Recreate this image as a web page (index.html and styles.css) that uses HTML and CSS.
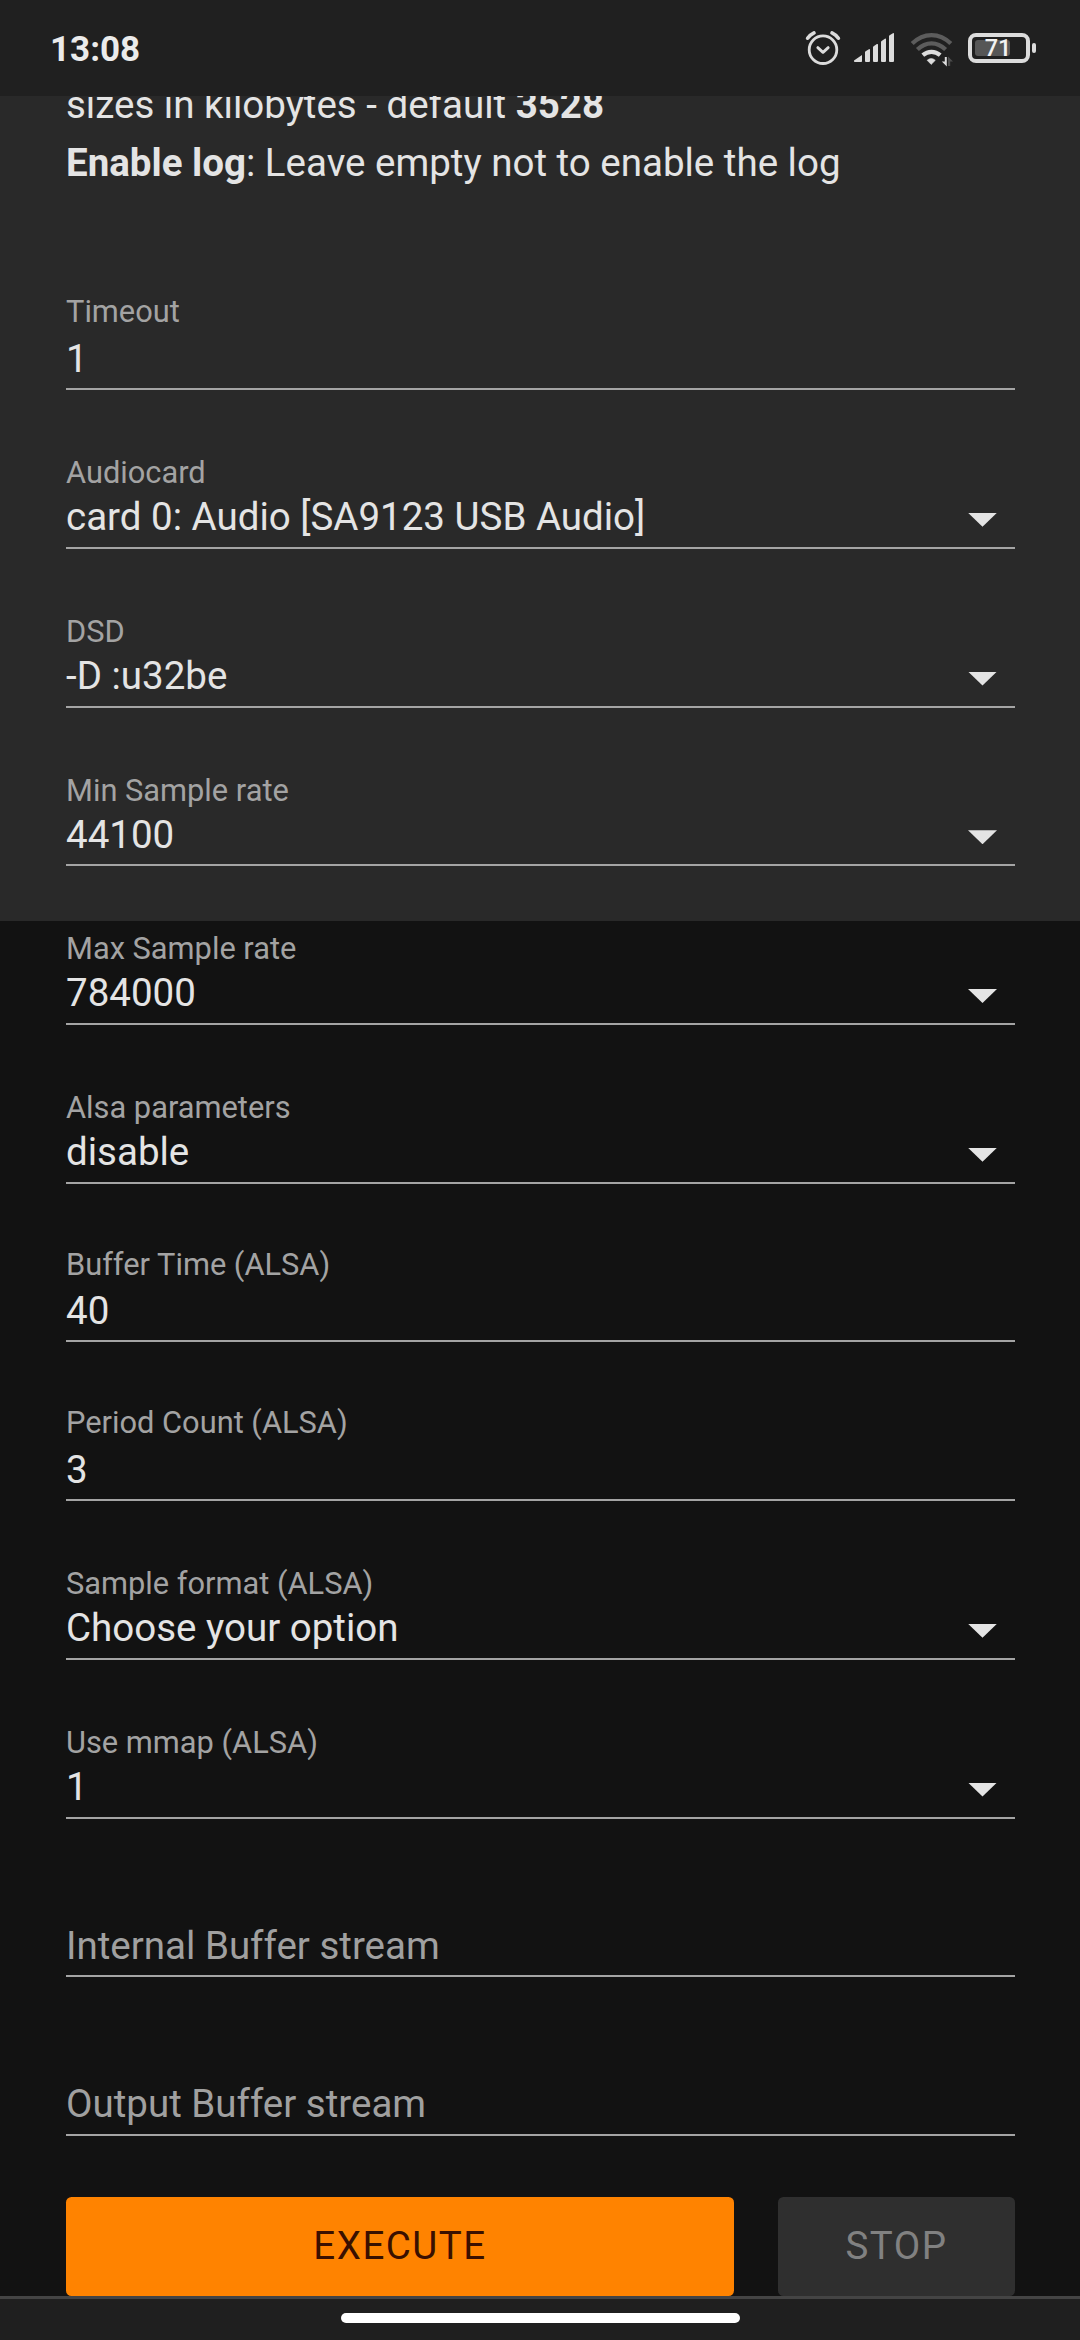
FILE: index.html
```html
<!DOCTYPE html>
<html lang="en">
<head>
<meta charset="utf-8">
<title>Player settings</title>
<link rel="stylesheet" href="styles.css">
</head>
<body>
<header class="status">
  <span class="clock">13:08</span>
  <div class="status-icons">
    <svg class="alarm" width="36" height="36" viewBox="0 0 36 36" fill="none" stroke="#dcdcdc" stroke-width="2.8" stroke-linecap="round" stroke-linejoin="round">
      <circle cx="18" cy="19.7" r="13.8"/>
      <path d="M12.8 17.6l5.2 4.8 5.2-4.8"/>
      <path stroke-width="3.6" d="M2.6 8.2Q5.2 4.7 9 2.9M27 2.9Q30.8 4.7 33.4 8.2"/>
    </svg>
    <svg class="signal" width="40" height="30" viewBox="0 0 40 30" fill="#dcdcdc">
      <path d="M0 27.6L8 22v6.2q0 .8-.8.8H.8Q0 29 0 28.2zM11 19.4q0-.7.6-1.1l3.3-2q1.1-.6 1.1.6V28q0 1-1 1h-3q-1 0-1-1zM19 14.4q0-.7.6-1.1l3.3-2.2q1.1-.6 1.1.6V28q0 1-1 1h-3q-1 0-1-1zM27 9q0-.7.6-1.1l3.3-2.2q1.1-.6 1.1.6V28q0 1-1 1h-3q-1 0-1-1zM35 3.4q0-.7.6-1.1L38.9.2q1.1-.6 1.1.6V28q0 1-1 1h-3q-1 0-1-1z"/>
    </svg>
    <svg class="wifi" width="44" height="34" viewBox="0 0 44 34" fill="none">
      <path d="M2.2 10.6Q10.7 2.1 21.5 2.1T40.8 10.6" stroke="#5c5c5c" stroke-width="4.2"/>
      <path d="M7.4 16.6Q13.8 10.4 21.5 10.4T35.6 16.6" stroke="#5c5c5c" stroke-width="4.2"/>
      <path d="M12.8 22.2Q16.7 18.8 21.5 18.8T30.2 22.2" stroke="#dcdcdc" stroke-width="4.2"/>
      <path d="M21.2 31.4l-4.100-4.100q4.100-3.600 8.200 0z" fill="#dcdcdc" stroke="#dcdcdc" stroke-width=".6"/>
      <path d="M36.8 24v9.400l-5-5h3V24z" fill="#dcdcdc"/>
      <path d="M38 33V23.600l5 5h-2.800V33z" fill="#4d4d4d"/>
    </svg>
    <span class="battery"><span class="battery-level"></span><b class="battery-text">71</b></span><span class="battery-tip"></span>
  </div>
</header>
<main class="page">
  <p class="help">sizes in kilobytes - default <b>3528</b><br><b>Enable log</b>: Leave empty not to enable the log</p>
  <div class="field field-input"><span class="label">Timeout</span><span class="value">1</span></div>
  <div class="field"><span class="label">Audiocard</span><span class="value">card 0: Audio [SA9123 USB Audio]<i class="caret"></i></span></div>
  <div class="field"><span class="label">DSD</span><span class="value">-D :u32be<i class="caret"></i></span></div>
  <div class="field"><span class="label">Min Sample rate</span><span class="value">44100<i class="caret"></i></span></div>
  <div class="field"><span class="label">Max Sample rate</span><span class="value">784000<i class="caret"></i></span></div>
  <div class="field"><span class="label">Alsa parameters</span><span class="value">disable<i class="caret"></i></span></div>
  <div class="field field-input"><span class="label">Buffer Time (ALSA)</span><span class="value">40</span></div>
  <div class="field field-input"><span class="label">Period Count (ALSA)</span><span class="value">3</span></div>
  <div class="field"><span class="label">Sample format (ALSA)</span><span class="value">Choose your option<i class="caret"></i></span></div>
  <div class="field"><span class="label">Use mmap (ALSA)</span><span class="value">1<i class="caret"></i></span></div>
  <div class="field"><span class="value placeholder">Internal Buffer stream</span></div>
  <div class="field"><span class="value placeholder">Output Buffer stream</span></div>
  <div class="actions">
    <button class="button execute">EXECUTE</button>
    <button class="button stop" disabled>STOP</button>
  </div>
</main>
<footer class="navbar"><span class="handle"></span></footer>
</body>
</html>
```
FILE: styles.css
```css
* { box-sizing: border-box; }
body {
  margin: 0;
  width: 1080px;
  height: 2340px;
  display: flex;
  flex-direction: column;
  overflow: hidden;
  background: #121212;
  color: #e4e4e4;
  font-family: Roboto, sans-serif;
  font-size: 38.5px;
}
.status {
  flex: none;
  height: 96px;
  padding: 0 44px 0 50px;
  display: flex;
  justify-content: space-between;
  align-items: flex-start;
  background: #202020;
}
.clock {
  margin-top: 29px;
  font-size: 35px;
  line-height: 41px;
  font-weight: 700;
  color: #ebebeb;
}
.status-icons { display: flex; align-items: flex-start; }
.alarm { margin: 30px 13px 0 0; }
.signal { margin: 33px 16px 0 0; }
.wifi { margin: 33px 14px 0 0; }
.battery {
  position: relative;
  width: 62px;
  height: 30px;
  margin-top: 33px;
  border: 4px solid #dcdcdc;
  border-radius: 8px;
  display: flex;
  justify-content: center;
  align-items: center;
}
.battery-level {
  position: absolute;
  left: 3px;
  top: 3px;
  width: 35px;
  height: 16px;
  border-radius: 3px;
  background: #565656;
}
.battery-text {
  position: relative;
  left: -1px;
  font-size: 23.5px;
  line-height: 24px;
  font-weight: 500;
  color: #f2f2f2;
}
.battery-tip {
  width: 4px;
  height: 10px;
  margin: 43px 0 0 2px;
  border-radius: 2px;
  background: #dcdcdc;
}
.page {
  flex: none;
  height: 2200px;
  padding: 0 65px 0 66px;
  overflow: hidden;
  background: linear-gradient(#292929 825px, #121212 825px);
}
.help {
  margin: -20px 0 39.9px;
  line-height: 57.75px;
  white-space: nowrap;
}
.field {
  height: 158.727px;
  display: flex;
  flex-direction: column;
  justify-content: flex-end;
  border-bottom: 2px solid #a4a4a4;
}
.label {
  font-size: 30.8px;
  line-height: 36px;
  margin-bottom: 3px;
  color: #a3a3a3;
}
.field-input .label { margin-bottom: 5.2px; }
.value {
  display: flex;
  justify-content: space-between;
  padding: 0 18px 6.6px 0;
  line-height: 46px;
}
.placeholder { color: #a0a0a0; }
.caret {
  width: 29px;
  height: 14px;
  margin-top: 18.6px;
  background: #e4e4e4;
  clip-path: polygon(0 0, 100% 0, 50% 100%);
}
.actions {
  display: flex;
  gap: 44px;
  margin-top: 60.8px;
}
.button {
  height: 99px;
  padding: 0 0 2px;
  border: 0;
  border-radius: 5.5px;
  font: inherit;
  letter-spacing: 1.5px;
}
.execute { width: 668px; background: #ff8300; color: #3a1000; }
.stop { width: 237px; background: #2f2f2f; color: #818181; }
.navbar {
  flex: none;
  height: 44px;
  display: flex;
  justify-content: center;
  align-items: flex-start;
  border-top: 3px solid #444;
  background: #1f1f1f;
}
.handle {
  width: 399px;
  height: 10px;
  margin-top: 14px;
  border-radius: 5px;
  background: #fff;
}
```
